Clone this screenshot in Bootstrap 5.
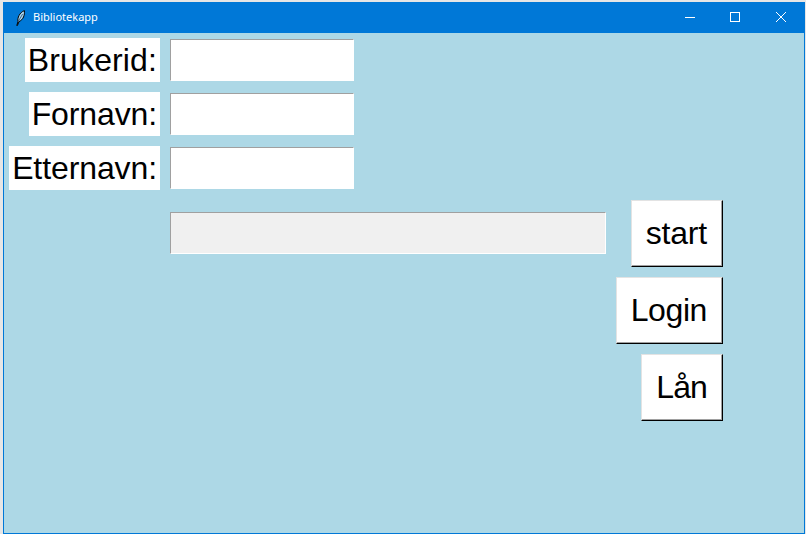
<!DOCTYPE html>
<html lang="no">
<head>
<meta charset="utf-8">
<title>Bibliotekapp</title>
<link rel="stylesheet" href="https://cdn.jsdelivr.net/npm/bootstrap@5.3.0/dist/css/bootstrap.min.css">
<style>
html, body { height: 534px; overflow: hidden; background: #e6e6e6; }
body { padding: 2px 1px 0 3px; font-family: "Liberation Sans", Arial, sans-serif; }
.app-window { height: 532px; border: 1px solid #0078d7; border-top: 0; background: #add8e6; }
.app-title { height: 31px; background: #0078d7; color: #fff; font-family: "Noto Sans", "Open Sans", sans-serif; font-size: 11px; padding-left: 12px; }
.app-title .feather { width: 9px; height: 16px; margin-right: 8px; }
.win-btn { width: 46px; height: 31px; padding-bottom: 1px; }
.win-min { padding-left: 2px; }
.app-form { display: grid; grid-template-columns: 151px 184px 242px 107px; grid-template-rows: 44px 44px 44px 67px 67px 67px; gap: 10px; padding: 5px 0 0 5px; }
.app-label { background: #fff; color: #000; font-size: 32px; line-height: 44px; padding: 0 3px; justify-self: end; }
.lbl-bruker { letter-spacing: .12px; }
.lbl-fornavn { letter-spacing: -.12px; }
.lbl-etternavn { letter-spacing: -.1px; }
.app-input { width: 184px; height: 42px; align-self: center; background: #fff; border: 1px solid; border-color: #a0a0a0 #fff #fff #a0a0a0; border-radius: 0; box-shadow: none; padding: 0; }
.app-progress { grid-column: 2 / span 2; width: 436px; height: 42px; margin-top: 12px; background: #f0f0f0; border: 1px solid; border-color: #a0a0a0 #fff #fff #a0a0a0; border-radius: 0; }
.app-btn { grid-column: 4; justify-self: end; height: 67px; padding: 0 15px 1px 14px; background: #fff; color: #000; font-size: 32px; line-height: 1; border: 1px solid; border-color: #e3e3e3 #000 #000 #e3e3e3; border-radius: 0; box-shadow: inset -1px -1px 0 #a0a0a0; }
.btn-start { letter-spacing: -.2px; }
.btn-login { letter-spacing: -.4px; }
.btn-laan { letter-spacing: -.9px; }
</style>
</head>
<body>
<div class="app-window d-flex flex-column">
  <div class="app-title d-flex align-items-center">
    <svg class="feather" viewBox="0 0 9 16"><path d="M.8 15.5 L2 11.5 C1.2 8 3.5 2.5 8.4.6 C8.8 5 7.5 9.5 3 11.6 L1.4 15.5 Z" fill="#a9d4ee" stroke="#000" stroke-width="1"/><path d="M2.4 11.2 L6.6 4" stroke="#1a3a5a" stroke-width=".7"/></svg>
    <span class="flex-grow-1">Bibliotekapp</span>
    <div class="win-btn win-min d-flex align-items-center justify-content-center"><svg width="10" height="10" viewBox="0 0 10 10"><path d="M0 5.5H10" stroke="#fff"/></svg></div>
    <div class="win-btn d-flex align-items-center justify-content-center"><svg width="10" height="10" viewBox="0 0 10 10"><rect x=".5" y=".5" width="9" height="9" fill="none" stroke="#fff"/></svg></div>
    <div class="win-btn d-flex align-items-center justify-content-center"><svg width="10" height="10" viewBox="0 0 10 10"><path d="M0 0L10 10M10 0L0 10" stroke="#fff"/></svg></div>
  </div>
  <div class="app-form">
    <label class="app-label lbl-bruker" for="f1">Brukerid:</label>
    <input id="f1" class="form-control app-input" type="text">
    <span></span><span></span>
    <label class="app-label lbl-fornavn" for="f2">Fornavn:</label>
    <input id="f2" class="form-control app-input" type="text">
    <span></span><span></span>
    <label class="app-label lbl-etternavn" for="f3">Etternavn:</label>
    <input id="f3" class="form-control app-input" type="text">
    <span></span><span></span>
    <span></span>
    <div class="app-progress"></div>
    <button class="btn app-btn btn-start" type="button">start</button>
    <button class="btn app-btn btn-login" type="button">Login</button>
    <button class="btn app-btn btn-laan" type="button">Lån</button>
  </div>
</div>
</body>
</html>
